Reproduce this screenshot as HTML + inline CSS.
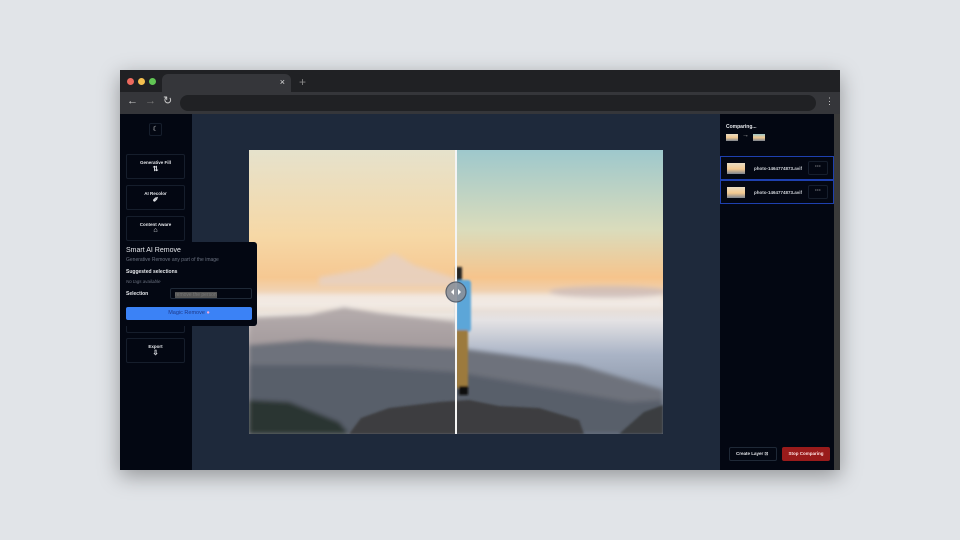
<!DOCTYPE html>
<html><head><style>
*{box-sizing:border-box;margin:0;padding:0}
body{width:960px;height:540px;background:#e1e4e8;font-family:"Liberation Sans",sans-serif;position:relative;overflow:hidden}
.win{position:absolute;left:120px;top:70px;width:720px;height:400px;background:#202124;box-shadow:0 6px 20px rgba(0,0,0,.35);overflow:hidden}
.dot{position:absolute;top:8px;width:7px;height:7px;border-radius:50%}
.tab{position:absolute;left:42px;top:4px;width:129px;height:19px;background:#35363a;border-radius:6px 6px 0 0}
.bar{position:absolute;left:0;top:22px;width:720px;height:22px;background:#35363a}
.url{position:absolute;left:60px;top:25px;width:636px;height:16px;background:#202124;border-radius:8px}
.app{position:absolute;left:0;top:44px;width:720px;height:356px;background:#1e293b}
.side{position:absolute;left:0;top:0;width:72px;height:356px;background:#030712}
.btn{position:absolute;left:6px;width:59px;height:25px;border:1px solid #161e2c;border-radius:2px;color:#e5e7eb;font-size:4.5px;font-weight:bold;text-align:center;padding-top:5px}
.right{position:absolute;left:600px;top:0;width:114px;height:356px;background:#030712}
.sb{position:absolute;left:714px;top:0;width:6px;height:356px;background:#3a3a3a}
.row{position:absolute;left:0;width:114px;height:24px;border:1px solid #1e40af;color:#d1d5db;font-size:4.5px;font-weight:bold}
.th{position:absolute;left:6px;top:6px;width:18px;height:11px;background:linear-gradient(#e8dcc4,#f2c890 55%,#7c8490)}
.more{position:absolute;left:87px;top:4px;width:20px;height:14px;border:1px solid #161e2c;border-radius:2px;text-align:center;font-size:6px;line-height:11px;color:#ccc}
.pop{position:absolute;left:0;top:128px;width:137px;height:84px;background:#030712;border-radius:0 3px 3px 0;color:#e5e7eb;z-index:5}
</style></head><body>
<div class="win">
<div class="dot" style="left:7px;background:#ed6a5e"></div>
<div class="dot" style="left:18px;background:#f4bf4f"></div>
<div class="dot" style="left:29px;background:#61c554"></div>
<div class="tab"><span style="position:absolute;right:6px;top:3px;color:#ddd;font-size:9px">×</span></div>
<span style="position:absolute;left:179px;top:5px;color:#888;font-size:12px">+</span>
<div class="bar"></div>
<span style="position:absolute;left:7px;top:25px;color:#ccc;font-size:11px">←</span>
<span style="position:absolute;left:25px;top:25px;color:#777;font-size:11px">→</span>
<span style="position:absolute;left:43px;top:24px;color:#ccc;font-size:11px">↻</span>
<div class="url"></div>
<span style="position:absolute;left:705px;top:26px;color:#ccc;font-size:9px">⋮</span>
<div class="app">
<div class="side">
<div style="position:absolute;left:29px;top:9px;width:13px;height:13px;border:1px solid #161e2c;border-radius:2px;color:#ccc;font-size:7px;text-align:center;line-height:11px">☾</div>
<div class="btn" style="top:40px">Generative Fill<br><span style="font-size:7px">⇅</span></div>
<div class="btn" style="top:71px">AI Recolor<br><span style="font-size:7px">✐</span></div>
<div class="btn" style="top:102px">Content Aware<br><span style="font-size:7px">⌂</span></div>
<div class="btn" style="top:194px;border-top:none;padding-top:13px">—</div>
<div class="btn" style="top:224px">Export<br><span style="font-size:7px">⇩</span></div>
</div>
<div class="pop">
<div style="position:absolute;left:6px;top:5px;font-size:7px">Smart AI Remove</div>
<div style="position:absolute;left:6px;top:15px;font-size:5px;color:#6b7280">Generative Remove any part of the image</div>
<div style="position:absolute;left:6px;top:27px;font-size:5px;font-weight:bold">Suggested selections</div>
<div style="position:absolute;left:6px;top:37px;font-size:4.5px;color:#6b7280;font-style:italic">No tags available</div>
<div style="position:absolute;left:6px;top:49px;font-size:5px;font-weight:bold">Selection</div>
<div style="position:absolute;left:50px;top:46px;width:82px;height:11px;border:1px solid #1f2937;border-radius:2px;font-size:5px;color:#555;padding:3px 4px"><span style="background:#555;color:#777">remove the person</span></div>
<div style="position:absolute;left:6px;top:65px;width:126px;height:13px;background:#3b82f6;border-radius:2px;font-size:5.5px;text-align:center;line-height:13px;color:#1e3a8a">Magic Remove <span style="color:#f9a8d4">●</span></div>
</div>
<svg style="position:absolute;left:129px;top:36px" width="414" height="284" viewBox="0 0 414 284">
<defs>
<linearGradient id="sl" x1="0" y1="0" x2="0" y2="1"><stop offset="0" stop-color="#e6e2cc"/><stop offset=".3" stop-color="#f6d8a6"/><stop offset=".45" stop-color="#f6c892"/><stop offset=".52" stop-color="#eed8c4"/><stop offset=".58" stop-color="#ece6e0"/><stop offset=".68" stop-color="#b0a8a8"/><stop offset="1" stop-color="#7a7c84"/></linearGradient>
<linearGradient id="sr" x1="0" y1="0" x2="0" y2="1"><stop offset="0" stop-color="#9ec8cc"/><stop offset=".28" stop-color="#dadcbc"/><stop offset=".45" stop-color="#f6c48c"/><stop offset=".54" stop-color="#eadcd0"/><stop offset=".6" stop-color="#e4e2e4"/><stop offset=".72" stop-color="#aab4c6"/><stop offset="1" stop-color="#6e7a8c"/></linearGradient>
<filter id="b"><feGaussianBlur stdDeviation="2.5"/></filter>
<filter id="b2"><feGaussianBlur stdDeviation="1"/></filter>
</defs>
<rect width="207" height="284" fill="url(#sl)"/>
<rect x="207" width="207" height="284" fill="url(#sr)"/>
<g filter="url(#b)">
<polygon points="70,127 120,118 145,103 165,115 207,128 207,136 70,136" fill="#e8d0c0" opacity=".9"/>
<rect x="0" y="144" width="414" height="14" fill="#f4f0ec" opacity=".7"/>
<ellipse cx="360" cy="142" rx="60" ry="6" fill="#c8b8b8" opacity=".7"/>
<polygon points="0,168 60,165 95,157 130,163 207,172 207,200 0,200" fill="#a49a9c" opacity=".8"/>
<polygon points="0,195 60,190 130,195 207,198 260,205 330,215 414,240 414,284 0,284" fill="#6e727c"/>
<polygon points="0,215 100,215 207,222 300,238 380,252 414,250 414,284 0,284" fill="#585e6a"/>
<polygon points="0,250 40,252 90,272 100,284 0,284" fill="#2a3430"/>
</g>
<g filter="url(#b2)">
<polygon points="100,284 112,268 140,258 190,252 220,250 250,256 290,258 330,270 335,284" fill="#3c3e40"/>
<polygon points="370,284 395,262 414,255 414,284" fill="#3a3c40"/>
<rect x="207" y="117" width="6" height="14" fill="#222"/>
<rect x="207" y="130" width="15" height="52" rx="3" fill="#5ba6d8"/>
<rect x="207" y="180" width="12" height="58" fill="#9c7a3c"/>
<rect x="210" y="236" width="9" height="9" fill="#111"/>
</g>
<rect x="206" y="0" width="2" height="284" fill="#f4f4f4"/>
<circle cx="207" cy="142" r="10" fill="#8a909a" stroke="#4b5563" stroke-width="1.2" opacity=".9"/>
<polygon points="205,139 205,145 202,142" fill="#fff"/><polygon points="209,139 209,145 212,142" fill="#fff"/>
</svg>
<div class="right">
<div style="position:absolute;left:6px;top:10px;font-size:5px;font-weight:bold;color:#e5e7eb">Comparing...</div>
<div style="position:absolute;left:6px;top:20px;width:12px;height:7px;background:linear-gradient(#e8dcc4,#f2c890,#7c8490)"></div>
<span style="position:absolute;left:22px;top:18px;font-size:7px;color:#aaa">→</span>
<div style="position:absolute;left:33px;top:20px;width:12px;height:7px;background:linear-gradient(#9cc8cc,#f2c890,#7c8490)"></div>
<div class="row" style="top:42px"><div class="th"></div><span style="position:absolute;left:33px;top:9px">photo-1464774873.avif</span><div class="more">···</div></div>
<div class="row" style="top:66px"><div class="th"></div><span style="position:absolute;left:33px;top:9px">photo-1464774873.avif</span><div class="more">···</div></div>
<div style="position:absolute;left:9px;top:333px;width:48px;height:14px;border:1px solid #1f2937;border-radius:2px;font-size:4.5px;font-weight:bold;color:#e5e7eb;line-height:12px;padding-left:6px">Create Layer ⊡</div>
<div style="position:absolute;left:62px;top:333px;width:48px;height:14px;background:#991b1b;border-radius:2px;font-size:4.5px;font-weight:bold;color:#fee2e2;line-height:14px;text-align:center">Stop Comparing</div>
</div>
<div class="sb"></div>
</div>
</div>
</body></html>
